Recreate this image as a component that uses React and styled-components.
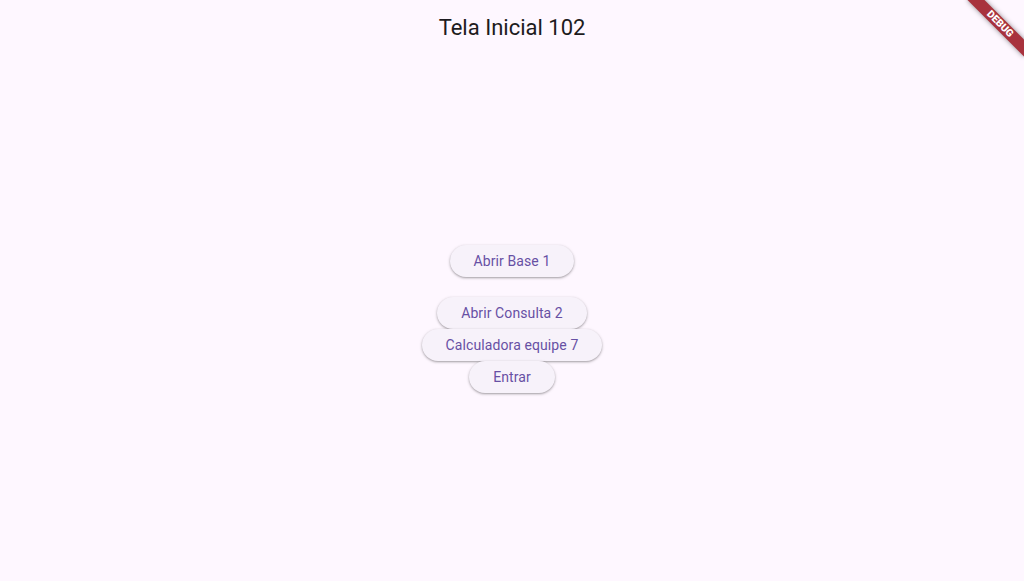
import React from 'react'
import styled, { createGlobalStyle } from 'styled-components'

const GlobalStyle = createGlobalStyle`
html, body {
    margin: 0;
    padding: 0;
    background-color: #fef7ff;
    font-family: Roboto, "Noto Sans", sans-serif;
    overflow: hidden;
}
`

const Page = styled.div`
position: relative;
width: 100vw;
height: 100vh;
display: flex;
flex-direction: column;
background-color: #fef7ff;
`

const AppBar = styled.header`
height: 56px;
flex: none;
display: flex;
align-items: center;
justify-content: center;
`

const Title = styled.h1`
margin: 0;
font-size: 22px;
font-weight: 400;
color: #1d1b20;
line-height: 28px;
`

const Body = styled.main`
flex: 1;
display: flex;
flex-direction: column;
align-items: center;
justify-content: center;
`

const Spacer = styled.div`
height: ${p => p.size}px;
`

const PillButton = styled.button`
height: 32px;
padding: 0 24px;
border: none;
border-radius: 16px;
background-color: #f7f2fa;
color: #6750a4;
font-family: Roboto, "Noto Sans", sans-serif;
font-size: 14px;
font-weight: 400;
letter-spacing: 0.1px;
box-shadow: 0 1px 2px rgba(0, 0, 0, 0.28), 0 1px 3px 1px rgba(0, 0, 0, 0.08);
cursor: pointer;
`

const Banner = styled.div`
position: absolute;
top: 18px;
right: -16px;
width: 80px;
height: 12px;
transform: rotate(45deg);
background-color: #a8323d;
box-shadow: 0 0 5px rgba(0, 0, 0, 0.45);
display: flex;
align-items: center;
justify-content: center;
color: white;
font-family: Roboto, "DejaVu Sans", sans-serif;
font-size: 10.2px;
font-weight: 900;
line-height: 1;
`

function App() {
    return (
        <Page>
            <GlobalStyle/>
            <AppBar>
                <Title>Tela Inicial 102</Title>
            </AppBar>
            <Body>
                <PillButton>Abrir Base 1</PillButton>
                <Spacer size={20}/>
                <PillButton>Abrir Consulta 2</PillButton>
                <PillButton>Calculadora equipe 7</PillButton>
                <PillButton>Entrar</PillButton>
            </Body>
            <Banner>DEBUG</Banner>
        </Page>
    )
}

export default App
